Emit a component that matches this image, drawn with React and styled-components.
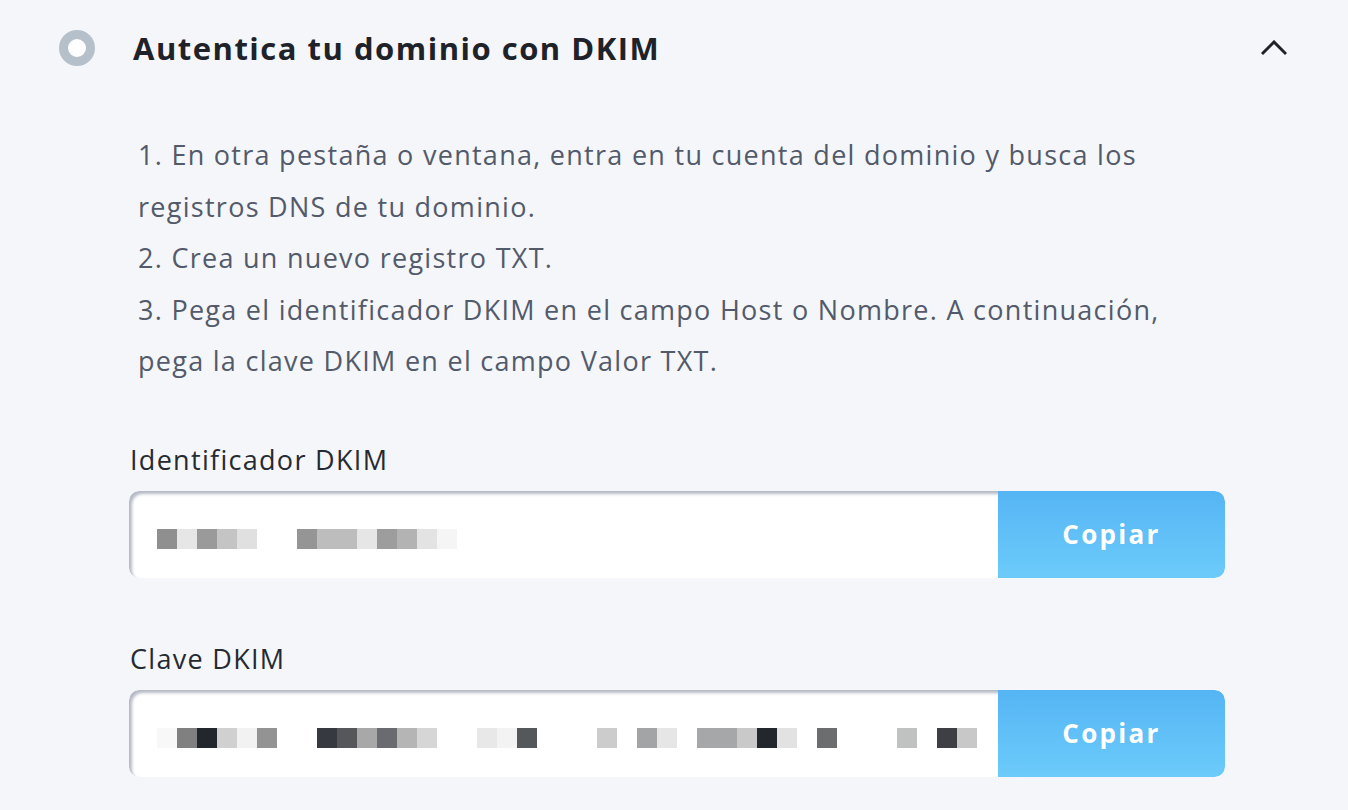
import React from "react";
import styled, { createGlobalStyle } from "styled-components";

const Global = createGlobalStyle`
  html, body { margin: 0; padding: 0; background: #f4f6fa; }
  body { font-family: "Open Sans", "Noto Sans", sans-serif; }
`;

const Page = styled.div`
  width: 1348px;
  height: 810px;
  background: #f4f6fa;
  box-sizing: border-box;
  padding: 0 0 0 59px;
  overflow: hidden;
`;

const Header = styled.div`
  display: flex;
  align-items: center;
  height: 96px;
  width: 1230px;
`;

const Status = styled.span`
  width: 36px;
  height: 36px;
  border-radius: 50%;
  background: #b6c0cb;
  display: flex;
  align-items: center;
  justify-content: center;
  flex: none;
  &::after {
    content: "";
    width: 18px;
    height: 18px;
    border-radius: 50%;
    background: #ffffff;
  }
`;

const Title = styled.h2`
  margin: 0 0 0 38px;
  font-family: "Open Sans", sans-serif;
  font-weight: 700;
  font-size: 31px;
  letter-spacing: 1.5px;
  color: #1f2329;
  flex: 1;
`;

const Chevron = styled.svg`
  width: 26px;
  height: 16px;
  margin-right: 2px;
`;

const Body = styled.div`
  padding: 33px 0 0 79px;
`;

const Steps = styled.div`
  font-family: "Open Sans", sans-serif;
  font-size: 27px;
  letter-spacing: 1.28px;
  line-height: 51.5px;
  color: #535a6a;
  white-space: nowrap;
`;

const Field = styled.div`
  margin: ${(p) => p.$top}px 0 0 -9px;
  width: 1096px;
`;

const Label = styled.div`
  font-family: "Open Sans", sans-serif;
  font-size: 27px;
  letter-spacing: 1.3px;
  color: #262a31;
  line-height: 36px;
  margin-bottom: 13px;
  padding-left: 1px;
`;

const Row = styled.div`
  display: flex;
  height: 87px;
  border-radius: 10px;
  overflow: hidden;
`;

const Input = styled.div`
  flex: 1;
  background: #ffffff;
  box-shadow: inset 3px 3px 3px rgba(120, 130, 150, 0.55);
  border-radius: 10px 0 0 10px;
  display: flex;
  align-items: center;
  padding: 10px 0 0 28px;
  box-sizing: border-box;
`;

const Pixel = styled.span`
  width: 20px;
  height: 20px;
  flex: none;
  background: ${(p) => p.$c || "transparent"};
`;

const CopyButton = styled.button`
  width: 227px;
  border: none;
  margin: 0;
  background: linear-gradient(180deg, #55b5f4 0%, #6ccbfa 100%);
  color: #ffffff;
  font-family: "Open Sans", sans-serif;
  font-weight: 700;
  font-size: 26px;
  letter-spacing: 2.3px;
  border-radius: 0 10px 10px 0;
  padding: 0;
  cursor: pointer;
`;

const row1 = ["#8f8f8f", "#e6e6e6", "#9a9a9a", "#c4c4c4", "#e0e0e0", null, null, "#959595", "#bdbdbd", "#bdbdbd", "#e6e6e6", "#9d9d9d", "#b3b3b3", "#e3e3e3", "#f5f5f5"];
const row2 = ["#f8f8f8", "#808080", "#22272e", "#d0d0d0", "#f2f2f2", "#939393", null, null, "#363a40", "#55575a", "#a8a8a8", "#6a6b70", "#b5b5b5", "#d6d6d6", null, null, "#e8e8e8", "#f3f3f3", "#55585b", null, null, null, "#cccccc", null, "#a3a4a6", "#e6e6e6", null, "#a6a7a8", "#a6a7a8", "#c9c9c9", "#22262d", "#e2e2e2", null, "#6b6d6e", null, null, null, "#c0c1c1", null, "#3d3f44", "#c8c8c8"];

function CopyField({ label, pixels, top }) {
  return (
    <Field $top={top}>
      <Label>{label}</Label>
      <Row>
        <Input>
          {pixels.map((c, i) => (
            <Pixel key={i} $c={c} />
          ))}
        </Input>
        <CopyButton>Copiar</CopyButton>
      </Row>
    </Field>
  );
}

export default function App() {
  return (
    <Page>
      <Global />
      <Header>
        <Status />
        <Title>Autentica tu dominio con DKIM</Title>
        <Chevron viewBox="0 0 26 16">
          <path d="M2 13 L13 2 L24 13" fill="none" stroke="#1f2329" strokeWidth="3" strokeLinecap="square" />
        </Chevron>
      </Header>
      <Body>
        <Steps>
          1. En otra pestaña o ventana, entra en tu cuenta del dominio y busca los
          <br />
          registros DNS de tu dominio.
          <br />
          2. Crea un nuevo registro TXT.
          <br />
          3. Pega el identificador DKIM en el campo Host o Nombre. A continuación,
          <br />
          pega la clave DKIM en el campo Valor TXT.
        </Steps>
        <CopyField label="Identificador DKIM" pixels={row1} top={55} />
        <CopyField label="Clave DKIM" pixels={row2} top={63} />
      </Body>
    </Page>
  );
}
